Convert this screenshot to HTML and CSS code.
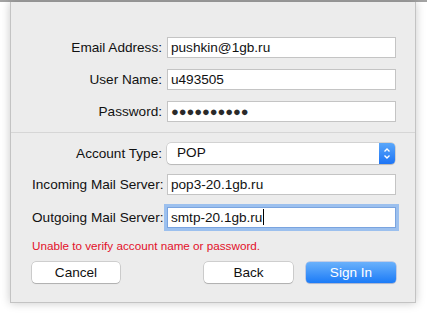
FILE: index.html
```html
<!DOCTYPE html>
<html>
<head>
<meta charset="utf-8">
<link rel="stylesheet" href="styles.css">
</head>
<body>
<div class="topline"></div>
<div class="window">
  <div class="section first">
    <div class="row"><label class="lbl">Email Address:</label><div class="field">pushkin@1gb.ru</div></div>
    <div class="row"><label class="lbl">User Name:</label><div class="field">u493505</div></div>
    <div class="row"><label class="lbl">Password:</label><div class="field dots">●●●●●●●●●●</div></div>
  </div>
  <div class="sep"></div>
  <div class="section second">
    <div class="row"><label class="lbl">Account Type:</label>
      <div class="select"><span class="seltext">POP</span>
        <span class="stepper"><svg width="16" height="21" viewBox="0 0 16 21"><path d="M5.5 8.5 L8 6 L10.5 8.5" fill="none" stroke="#fff" stroke-width="1.4"/><path d="M5.5 12.5 L8 15 L10.5 12.5" fill="none" stroke="#fff" stroke-width="1.4"/></svg></span>
      </div>
    </div>
    <div class="row r-in"><label class="lbl">Incoming Mail Server:</label><div class="field">pop3-20.1gb.ru</div></div>
    <div class="row r-out"><label class="lbl">Outgoing Mail Server:</label><div class="field focus">smtp-20.1gb.ru<span class="caret"></span></div></div>
    <p class="error">Unable to verify account name or password.</p>
    <div class="buttons">
      <button class="btn cancel">Cancel</button>
      <div class="right">
        <button class="btn">Back</button>
        <button class="btn primary">Sign In</button>
      </div>
    </div>
  </div>
</div>
</body>
</html>
```
FILE: styles.css
```css
html, body {
  margin: 0;
  padding: 0;
  background: #ffffff;
  width: 427px;
  height: 314px;
  overflow: hidden;
  font-family: "Liberation Sans", Arial, sans-serif;
  font-size: 13.6px;
  color: #111;
}
.topline {
  height: 2px;
  background: #a3a3a3;
}
.window {
  margin-left: 10px;
  width: 404px;
  height: 300px;
  background: #ececec;
  border: 1px solid #c3c3c3;
  border-top: none;
  box-shadow: 0 0 9px rgba(0,0,0,0.22);
  box-sizing: content-box;
}
.section {
  padding-left: 21px;
  padding-right: 19px;
}
.section.first {
  padding-top: 35px;
  padding-bottom: 10px;
}
.row {
  display: grid;
  grid-template-columns: 130px 229px;
  column-gap: 5px;
  align-items: center;
  height: 21px;
  margin-bottom: 11px;
}
.section.first .row:last-child { margin-bottom: 0; }
.lbl {
  text-align: right;
  white-space: nowrap;
  line-height: 21px;
}
.field {
  height: 21px;
  box-sizing: border-box;
  background: #fff;
  border: 1px solid #c4c4c4;
  padding-left: 3px;
  line-height: 19px;
  color: #111;
  white-space: nowrap;
}
.dots {
  font-size: 13px;
  letter-spacing: -0.1px;
  color: #2a2a2a;
}
.sep {
  height: 1px;
  background: #d6d6d6;
}
.section.second {
  padding-top: 10px;
}
.section.second .row { margin-bottom: 10px; }
.section.second .row.r-in { margin-bottom: 12px; }
.section.second .row.r-out { margin-bottom: 0; }
.select {
  height: 21px;
  box-sizing: border-box;
  width: 228px;
  background: #fff;
  border-radius: 4px;
  box-shadow: 0 0 0 0.5px rgba(0,0,0,0.22), 0 1px 1px rgba(0,0,0,0.12);
  display: flex;
  align-items: center;
  justify-content: space-between;
}
.seltext {
  padding-left: 10px;
  line-height: 19px;
  padding-bottom: 2px;
}
.stepper {
  width: 16px;
  height: 21px;
  border-radius: 0 4px 4px 0;
  background: linear-gradient(#5aa7fa, #1d74f5);
  display: flex;
}
.focus {
  border-color: #7aa4df;
  box-shadow: 0 0 0 3px #9cc0ee;
}
.caret {
  display: inline-block;
  width: 1px;
  height: 16px;
  background: #000;
  vertical-align: -3px;
  margin-left: 1px;
}
.error {
  margin: 11px 0 0 0;
  font-size: 11.7px;
  line-height: 13px;
  color: #e3102a;
}
.buttons {
  margin-top: 10px;
  display: flex;
  justify-content: space-between;
  width: 364px;
}
.right {
  display: flex;
  gap: 13px;
}
.btn {
  font-family: "Liberation Sans", Arial, sans-serif;
  font-size: 13.6px;
  color: #111;
  height: 21px;
  width: 89px;
  padding: 0;
  background: #fff;
  border: none;
  border-radius: 4px;
  box-shadow: 0 0 0 0.5px rgba(0,0,0,0.25), 0 1px 1px rgba(0,0,0,0.15);
  line-height: 21px;
}
.cancel { width: 88px; }
.primary {
  width: 90px;
  color: #fff;
  background: linear-gradient(#6ab1fb, #1b7bf7);
  box-shadow: 0 0 0 0.5px rgba(0,60,200,0.35), 0 1px 1px rgba(0,0,0,0.12);
}
```
